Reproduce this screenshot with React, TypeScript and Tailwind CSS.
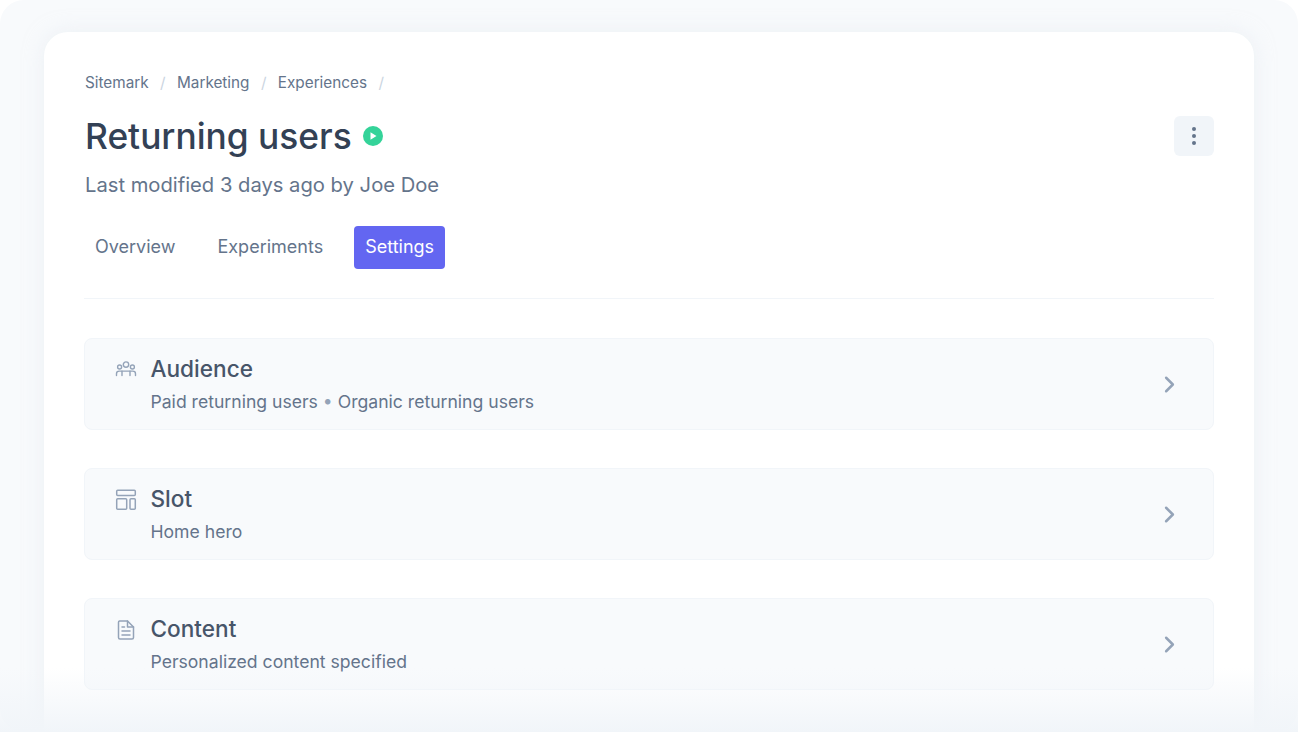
import React from 'react';
import { ChevronRight } from 'lucide-react';

const AudienceIcon = () => (
  <svg width="22" height="22" viewBox="0 0 22 22" fill="none" stroke="#94a3b8" strokeWidth="1.4" strokeLinecap="round" strokeLinejoin="round">
    <circle cx="11" cy="5.6" r="2.7" />
    <circle cx="4.6" cy="8" r="2" />
    <circle cx="17.4" cy="8" r="2" />
    <path d="M1.5 16.5v-1.8c0-1.5 1.2-2.6 2.7-2.6h13.6c1.5 0 2.7 1.1 2.7 2.6v1.8" />
    <path d="M7 16.5v-4.4M15 16.5v-4.4" />
  </svg>
);

const SlotIcon = () => (
  <svg width="22" height="22" viewBox="0 0 22 22" fill="none" stroke="#94a3b8" strokeWidth="1.5" strokeLinejoin="round">
    <rect x="1.7" y="1.2" width="18.6" height="5.2" rx="1" />
    <rect x="1.7" y="9.8" width="10" height="10.5" rx="1" />
    <rect x="15" y="9.8" width="5.3" height="10.5" rx="1" />
  </svg>
);

const ContentIcon = () => (
  <svg width="22" height="22" viewBox="0 0 22 22" fill="none" stroke="#94a3b8" strokeWidth="1.5" strokeLinecap="round" strokeLinejoin="round">
    <path d="M4.5 2h8l6 6v10.5a1.5 1.5 0 0 1-1.5 1.5h-12A1.5 1.5 0 0 1 3.5 18.5v-15A1.5 1.5 0 0 1 4.5 2Z" />
    <path d="M12.5 2v6h6" />
    <path d="M7 8h2.5M7 12h8M7 16h8" />
  </svg>
);

const rows = [
  {
    title: 'Audience',
    sub: (
      <>
        Paid returning users <span className="text-[#94a3b8]">•</span> Organic returning users
      </>
    ),
    icon: <AudienceIcon />,
  },
  { title: 'Slot', sub: 'Home hero', icon: <SlotIcon /> },
  { title: 'Content', sub: 'Personalized content specified', icon: <ContentIcon /> },
];

export default function App() {
  return (
    <div className="relative h-[732px] w-[1298px] overflow-hidden bg-white font-['Inter',sans-serif]">
      <div className="h-full rounded-[24px] bg-[#f8fafc] px-[44px] pt-[32px]">
        <div className="h-full rounded-t-[24px] bg-white px-[40px] pt-[40px] shadow-[0_0_20px_rgba(226,232,240,0.5)]">
          <div className="ml-px flex h-[22px] items-center pt-px text-[15.3px] text-[#64748b]">
            <span>Sitemark</span>
            <span className="mx-[11.4px] text-[#cbd5e1]">/</span>
            <span>Marketing</span>
            <span className="mx-[11.4px] text-[#cbd5e1]">/</span>
            <span>Experiences</span>
            <span className="mx-[11.4px] text-[#cbd5e1]">/</span>
          </div>

          <div className="mt-[20px] flex h-[44px] items-center justify-between">
            <div className="ml-px flex items-center gap-[11px]">
              <h1 className="pt-[2px] text-[35.3px] leading-[44px] font-medium text-[#334155]">Returning users</h1>
              <svg width="20" height="20" viewBox="0 0 20 20">
                <circle cx="10" cy="10" r="10" fill="#34d399" />
                <path d="M7.5 6.2v7.6l6-3.8Z" fill="#fff" />
              </svg>
            </div>
            <button className="flex h-[40px] w-[40px] flex-col items-center justify-center gap-[3px] rounded-[6px] bg-[#f1f5f9]">
              <span className="h-[4px] w-[4px] rounded-full bg-[#64748b]" />
              <span className="h-[4px] w-[4px] rounded-full bg-[#64748b]" />
              <span className="h-[4px] w-[4px] rounded-full bg-[#64748b]" />
            </button>
          </div>

          <p className="mt-[13px] ml-px text-[20.2px] leading-[28px] text-[#64748b]">Last modified 3 days ago by Joe Doe</p>

          <div className="mt-[27px] flex items-center gap-[20px] border-b border-[#f1f5f9] pb-[29px] text-[18px] leading-[25px] font-normal text-[#64748b]">
            <span className="rounded-[6px] px-[11px] pt-[8px] pb-[10px]">Overview</span>
            <span className="rounded-[6px] px-[11px] pt-[8px] pb-[10px]">Experiments</span>
            <span className="rounded-[4px] bg-[#6366f1] px-[11px] pt-[8px] pb-[10px] text-white">Settings</span>
          </div>

          <div className="mt-[39px] flex flex-col gap-[38px]">
            {rows.map((r) => (
              <div key={r.title} className="flex h-[92px] items-center justify-between rounded-[8px] border border-[#f1f5f9] bg-[#f8fafc] pr-[30px] pl-[29.5px]">
                <div className="flex items-start gap-[14px]">
                  <div className="mt-[5px]">{r.icon}</div>
                  <div>
                    <div className="text-[22.6px] leading-[30px] font-medium text-[#475569]">{r.title}</div>
                    <div className="mt-[6px] text-[17.6px] leading-[24px] text-[#64748b]">{r.sub}</div>
                  </div>
                </div>
                <ChevronRight size={27} className="text-[#94a3b8]" strokeWidth={2.2} />
              </div>
            ))}
          </div>
        </div>
      </div>
      <div className="absolute inset-x-0 bottom-0 h-[64px] bg-gradient-to-b from-[#f1f5f900] to-[#f1f5f9]" />
    </div>
  );
}
